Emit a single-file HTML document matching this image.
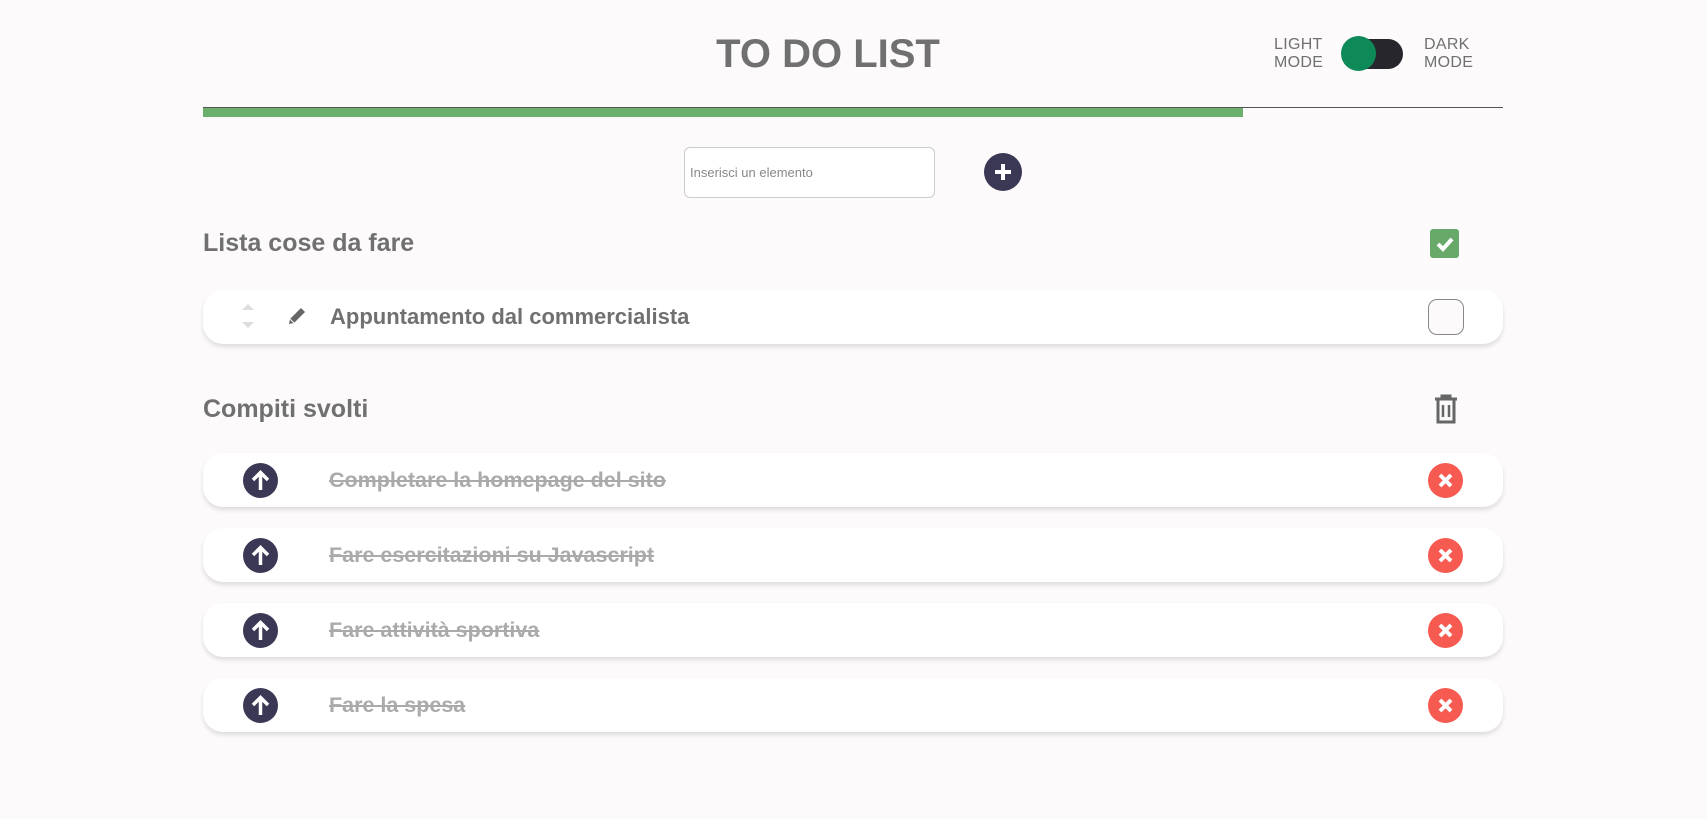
<!DOCTYPE html>
<html><head><meta charset="utf-8"><style>
body{margin:0;width:1707px;height:819px;background:#fcfafb;font-family:"Liberation Sans",sans-serif;position:relative;overflow:hidden}
.a{position:absolute}
h1{position:absolute;left:0;width:1656px;text-align:center;top:32px;margin:0;font-size:40px;font-weight:900;color:#707070;letter-spacing:0px}
.lbl{font-size:16px;color:#707070;line-height:18px;letter-spacing:0.3px}
.h2{font-size:25px;font-weight:900;color:#707070}
.row{position:absolute;left:203px;width:1300px;height:54px;background:#fff;border-radius:20px;box-shadow:0 3px 5px rgba(0,0,0,.12)}
.t{position:absolute;left:127px;top:14px;font-size:22px;font-weight:bold}
.done .t{color:#aaa;text-decoration:line-through;font-size:21.5px;left:126px;top:15px}
.up{position:absolute;left:40px;top:10px;width:35px;height:35px;border-radius:50%;background:#3b3855}
.x{position:absolute;left:1225px;top:10px;width:35px;height:35px;border-radius:50%;background:#f65a50}
</style></head><body>
<h1>TO DO LIST</h1>
<div class="a lbl" style="left:1274px;top:36px">LIGHT<br>MODE</div>
<div class="a" style="left:1342px;top:39px;width:61px;height:30px;border-radius:15px;background:#26262c"></div>
<div class="a" style="left:1341px;top:36px;width:35px;height:35px;border-radius:50%;background:#0d8a57"></div>
<div class="a lbl" style="left:1424px;top:36px">DARK<br>MODE</div>
<div class="a" style="left:203px;top:107px;width:1300px;height:1px;background:#555"></div>
<div class="a" style="left:203px;top:108px;width:1040px;height:9px;background:#6daf6d"></div>
<div class="a" style="left:684px;top:147px;width:249px;height:49px;border:1px solid #ccc;border-radius:6px;background:#fff"></div>
<div class="a" style="left:690px;top:165px;font-size:13px;color:#888">Inserisci un elemento</div>
<div class="a" style="left:984px;top:153px;width:38px;height:38px;border-radius:50%;background:#3b3855"></div>
<svg class="a" style="left:984px;top:153px" width="38" height="38"><path d="M19 11v16M11 19h16" stroke="#fff" stroke-width="4"/></svg>
<div class="a h2" style="left:203px;top:229px">Lista cose da fare</div>
<div class="a" style="left:1430px;top:229px;width:29px;height:29px;border-radius:3px;background:#68a96a"></div>
<svg class="a" style="left:1430px;top:229px" width="29" height="29"><path d="M8 15l5 5 9-10" stroke="#fff" stroke-width="4" fill="none"/></svg>
<div class="row" style="top:290px">
<svg class="a" style="left:37px;top:10px" width="16" height="34"><path d="M2 10l6-6 6 6z M2 22l6 6 6-6z" fill="#ddd"/></svg>
<svg class="a" style="left:82px;top:14px" width="24" height="24"><path d="M4 20l1-5L16 4l4 4L9 19z" fill="#666"/><path d="M5 15l4 4" stroke="#fff" stroke-width="1"/></svg>
<div class="t" style="color:#707070">Appuntamento dal commercialista</div>
<div class="a" style="left:1225px;top:9px;width:34px;height:34px;border:1px solid #888;border-radius:9px;background:#fcfafb"></div>
</div>
<div class="a h2" style="left:203px;top:395px">Compiti svolti</div>
<svg class="a" style="left:1432px;top:393px" width="28" height="32"><path d="M3 6h22M10 6V3h8v3M6 7v22h16V7" stroke="#666" stroke-width="3" fill="none"/><path d="M11 12v12M17 12v12" stroke="#666" stroke-width="2.5"/></svg>
<div class="row done" style="top:453px"><div class="up"></div><svg class="a" style="left:40px;top:10px" width="35" height="35"><path d="M17.5 27V10M10 17l7.5-7.5L25 17" stroke="#fff" stroke-width="3.5" fill="none"/></svg><div class="t">Completare la homepage del sito</div><div class="x"></div><svg class="a" style="left:1225px;top:10px" width="35" height="35"><path d="M12 12l11 11M23 12L12 23" stroke="#fff" stroke-width="4"/></svg></div>
<div class="row done" style="top:528px"><div class="up"></div><svg class="a" style="left:40px;top:10px" width="35" height="35"><path d="M17.5 27V10M10 17l7.5-7.5L25 17" stroke="#fff" stroke-width="3.5" fill="none"/></svg><div class="t">Fare esercitazioni su Javascript</div><div class="x"></div><svg class="a" style="left:1225px;top:10px" width="35" height="35"><path d="M12 12l11 11M23 12L12 23" stroke="#fff" stroke-width="4"/></svg></div>
<div class="row done" style="top:603px"><div class="up"></div><svg class="a" style="left:40px;top:10px" width="35" height="35"><path d="M17.5 27V10M10 17l7.5-7.5L25 17" stroke="#fff" stroke-width="3.5" fill="none"/></svg><div class="t">Fare attività sportiva</div><div class="x"></div><svg class="a" style="left:1225px;top:10px" width="35" height="35"><path d="M12 12l11 11M23 12L12 23" stroke="#fff" stroke-width="4"/></svg></div>
<div class="row done" style="top:678px"><div class="up"></div><svg class="a" style="left:40px;top:10px" width="35" height="35"><path d="M17.5 27V10M10 17l7.5-7.5L25 17" stroke="#fff" stroke-width="3.5" fill="none"/></svg><div class="t">Fare la spesa</div><div class="x"></div><svg class="a" style="left:1225px;top:10px" width="35" height="35"><path d="M12 12l11 11M23 12L12 23" stroke="#fff" stroke-width="4"/></svg></div>
</body></html>
